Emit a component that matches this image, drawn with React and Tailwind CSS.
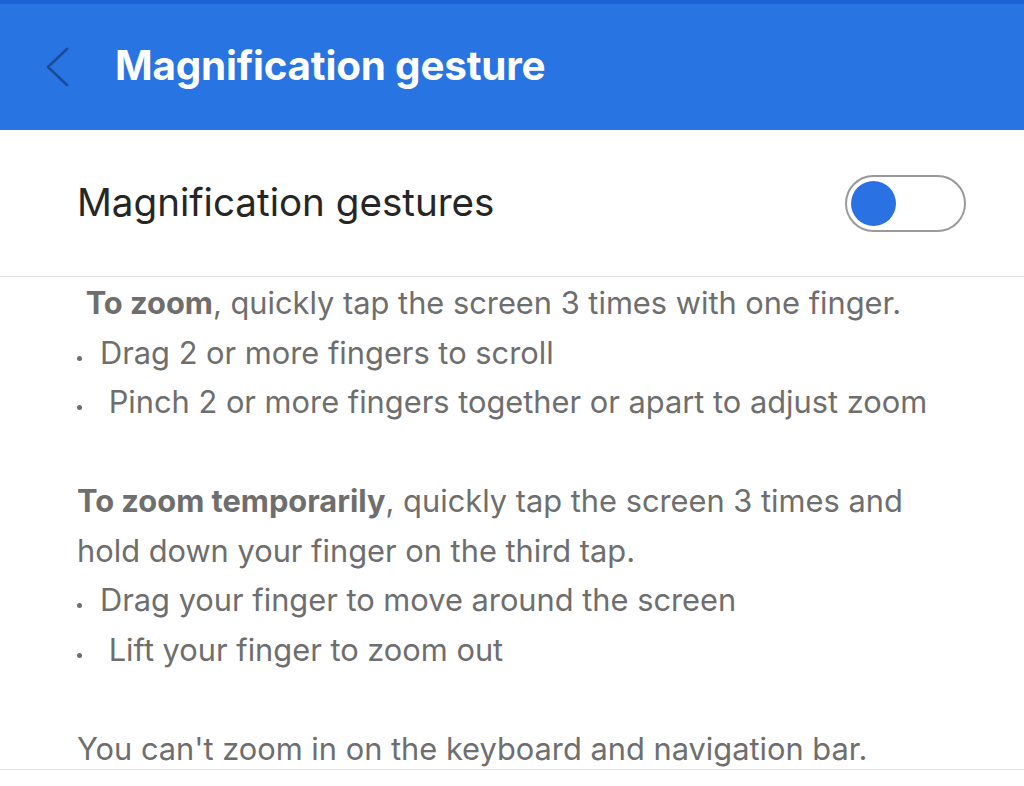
function Dot() {
  return (
    <span className="inline-flex w-[23px] items-center align-middle">
      <span className="w-[5px] h-[5px] rounded-full bg-[#6e6e6e] translate-y-[3px]" />
    </span>
  );
}

export default function App() {
  const body = "text-[30.8px] leading-[49.5px] text-[#6e6e6e]";
  return (
    <div className="w-[1024px] h-[786px] bg-white overflow-hidden" style={{ fontFamily: "Inter, Roboto, 'Noto Sans', sans-serif" }}>
      {/* Top bar */}
      <div className="h-[4px] bg-[#1c62d6]" />
      <div className="h-[126px] bg-[#2874e2] flex items-center">
        <div className="w-[115px] pl-[44px] flex items-center">
          <svg width="26" height="40" viewBox="0 0 26 40" fill="none">
            <path d="M23 2 L4 20 L23 38" stroke="#1a4c9a" strokeWidth="2.6" strokeLinecap="round" strokeLinejoin="round" />
          </svg>
        </div>
        <h1 className="text-white font-bold text-[40.4px] tracking-[-0.2px] -mt-[2px]">Magnification gesture</h1>
      </div>

      {/* Switch row */}
      <div className="pl-[77px] pr-[58px] h-[147px] flex items-center justify-between border-b border-[#e2e2e2]">
        <span className="text-[38.6px] text-[#262626]">Magnification gestures</span>
        <div className="w-[121px] h-[57px] rounded-full border-2 border-[#9a9a9a] flex items-center pl-[4px]">
          <div className="w-[45px] h-[45px] rounded-full bg-[#2a72e4]" />
        </div>
      </div>

      {/* Description */}
      <div className={`pl-[77px] pt-[1px] ${body}`}>
        <p>&nbsp;<b className="font-bold">To zoom</b>, quickly tap the screen 3 times with one finger.</p>
        <p><Dot />Drag 2 or more fingers to scroll</p>
        <p><Dot />&nbsp;Pinch 2 or more fingers together or apart to adjust zoom</p>
        <p>&nbsp;</p>
        <p><b className="font-bold">To zoom temporarily</b>, quickly tap the screen 3 times and</p>
        <p>hold down your finger on the third tap.</p>
        <p><Dot />Drag your finger to move around the screen</p>
        <p><Dot />&nbsp;Lift your finger to zoom out</p>
        <p>&nbsp;</p>
        <p>You can't zoom in on the keyboard and navigation bar.</p>
      </div>
      <div className="-mt-[4px] border-t border-[#e2e2e2]" />
    </div>
  );
}
